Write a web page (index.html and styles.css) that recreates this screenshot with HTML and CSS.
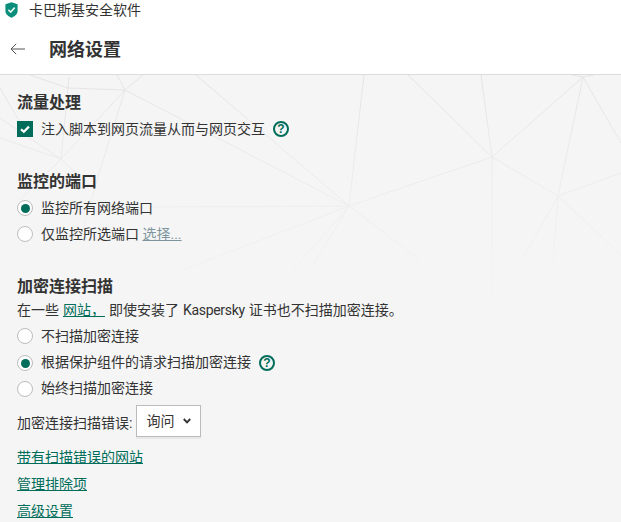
FILE: index.html
```html
<!DOCTYPE html>
<html lang="zh-CN">
<head>
<meta charset="utf-8">
<title>网络设置</title>
<link rel="stylesheet" href="styles.css">
</head>
<body>
<header class="top">
  <div class="titlebar">
    <svg class="shield" viewBox="0 0 13 16" width="13" height="16"><path d="M6.5 0.3 L12.6 2.2 V9 C12.6 12.2 9.6 14.4 6.5 15.8 C3.4 14.4 0.4 12.2 0.4 9 V2.2 Z" fill="#0b8f7c"/><path d="M3.4 7.8 L5.7 10 L9.7 5.6" fill="none" stroke="#e9f5f2" stroke-width="1.6"/></svg>
    <span class="label">卡巴斯基安全软件</span>
  </div>
  <div class="pagehead">
    <svg class="back" viewBox="0 0 15 12" width="15" height="12"><path d="M15 6 H1 M6.2 0.8 L1 6 L6.2 11.2" fill="none" stroke="#555" stroke-width="1"/></svg>
    <h1>网络设置</h1>
  </div>
</header>
<main class="content">
  <svg class="mesh" viewBox="0 75 621 447" width="621" height="447">
    <defs><linearGradient id="fade" gradientUnits="userSpaceOnUse" x1="0" y1="75" x2="0" y2="340"><stop offset="0" stop-color="#e4e4e4"/><stop offset="0.5" stop-color="#eeeeee"/><stop offset="1" stop-color="#f5f5f5"/></linearGradient></defs>
    <path d="M364 75 L349 206 M408 75 L492 157 M481 75 L492 157 M492 157 L583 77 L558 196 M583 77 L621 143 M492 157 L349 206 M492 157 V300 M492 157 L558 196 L621 173 M558 196 L522 260 M558 196 L553 260 M558 196 L621 255 M349 206 L420 260 M349 206 L196 75 M349 206 L125 90 M349 206 L150 207 M349 206 L183 270 M349 206 L293 270 M349 206 L310 270 M125 90 L117 75 M125 90 L143 75 M125 90 L97 180 M125 90 L61 159 M125 90 L68 88 M69 77 L61 159 M68 88 L30 75 M61 159 L0 138 M61 159 L0 118 M61 159 L20 200 M0 88 L30 140 M97 180 L80 240 M61 159 L95 190 M572 75 L583 77 L594 75" fill="none" stroke="url(#fade)" stroke-width="1"/>
  </svg>
  <section class="group first">
    <h2>流量处理</h2>
    <div class="row">
      <span class="check"><svg viewBox="0 0 16 16" width="16" height="16"><path d="M4 8.2 L6.8 10.8 L12 5.6" fill="none" stroke="#fff" stroke-width="2.2"/></svg></span>
      <span class="label">注入脚本到网页流量从而与网页交互</span>
      <svg class="help" viewBox="0 0 16 16" width="16" height="16"><circle cx="8" cy="8" r="7" fill="none" stroke="#006d5b" stroke-width="2"/><text x="8" y="12" text-anchor="middle" class="qmark">?</text></svg>
    </div>
  </section>
  <section class="group second">
    <h2>监控的端口</h2>
    <div class="row"><span class="radio on"></span><span class="label">监控所有网络端口</span></div>
    <div class="row"><span class="radio"></span><span class="label">仅监控所选端口 <a class="muted" href="#">选择...</a></span></div>
  </section>
  <section class="group third">
    <h2>加密连接扫描</h2>
    <p class="desc">在一些 <a href="#">网站，</a> 即使安装了 <span class="brand">Kaspersky</span> 证书也不扫描加密连接。</p>
    <div class="row"><span class="radio"></span><span class="label">不扫描加密连接</span></div>
    <div class="row next"><span class="radio on"></span><span class="label raised">根据保护组件的请求扫描加密连接</span>
      <svg class="help" viewBox="0 0 16 16" width="16" height="16"><circle cx="8" cy="8" r="7" fill="none" stroke="#006d5b" stroke-width="2"/><text x="8" y="12" text-anchor="middle" class="qmark">?</text></svg>
    </div>
    <div class="row"><span class="radio"></span><span class="label raised">始终扫描加密连接</span></div>
    <div class="selectrow">
      <span class="selectlabel">加密连接扫描错误:</span>
      <div class="select"><span>询问</span><svg viewBox="0 0 8 6" width="8" height="6"><path d="M0.8 1 L4 4.4 L7.2 1" fill="none" stroke="#333" stroke-width="1.9"/></svg></div>
    </div>
    <div class="links">
      <a href="#">带有扫描错误的网站</a>
      <a href="#">管理排除项</a>
      <a href="#">高级设置</a>
    </div>
  </section>
</main>
</body>
</html>
```

FILE: styles.css
```css
* { box-sizing: border-box; }
html, body { margin: 0; height: 522px; overflow: hidden; }
body {
  background: #f5f5f5;
  color: #333;
  font: 14px/20px Roboto, "Noto Sans CJK SC", "Noto Sans", sans-serif;
}
.top { height: 75px; background: #fff; border-bottom: 1px solid #dcdcdc; }
.titlebar { height: 20px; display: flex; align-items: center; gap: 11px; padding-left: 5px; }
.shield { display: block; }
.pagehead { height: 54px; padding: 4px 0 0 10px; display: flex; align-items: center; }
.back { margin-right: 24px; }
h1 { margin: 0; padding-top: 2px; font-size: 18px; line-height: 26px; font-weight: 700; color: #333; }
.content { position: relative; height: 447px; padding-left: 17px; overflow: hidden; }
.mesh { position: absolute; left: 0; top: 0; display: block; }
.group { position: relative; }
.first { padding-top: 15px; }
.second { padding-top: 27px; }
.third { padding-top: 27px; }
h2 { margin: 0 0 3px; padding-top: 2px; height: 23px; font-size: 16px; line-height: 21px; font-weight: 700; color: #333; }
.row { height: 26px; display: flex; align-items: center; gap: 8px; }
.row.next { margin-top: 1px; }
.label.raised { margin-top: -2px; }
.check { width: 16px; height: 16px; background: #006d5b; display: block; }
.check svg { display: block; }
.radio { width: 16px; height: 16px; border-radius: 50%; border: 1px solid #bdbdbd; background: #fff; display: flex; align-items: center; justify-content: center; flex: none; }
.radio.on::after { content: ""; width: 9px; height: 9px; border-radius: 50%; background: #006d5b; }
.qmark { font: 700 12px "Liberation Sans", sans-serif; fill: #006d5b; }
a { color: #006d5b; text-decoration: underline; }
a.muted { color: #7f959d; }
.desc { margin: -3px 0 0; height: 26px; line-height: 26px; word-spacing: 0.5px; }
.brand { letter-spacing: -0.3px; }
.selectrow { display: flex; align-items: center; gap: 4px; height: 32px; margin-top: 3px; }
.selectlabel { margin-top: 4px; }
.select { width: 65px; height: 32px; background: #fff; border: 1px solid #bbb; box-shadow: 0 2px 0 #e8e8e8; display: flex; align-items: center; justify-content: space-between; padding: 0 9px; }
.select span { line-height: 26px; }
.links { display: flex; flex-direction: column; align-items: flex-start; gap: 7px; margin-top: 10px; }
```
